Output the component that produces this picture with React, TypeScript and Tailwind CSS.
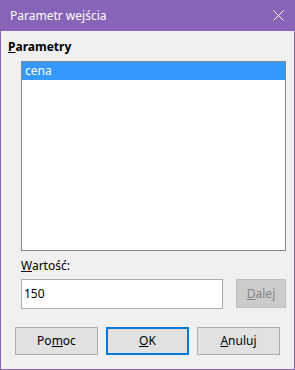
export default function App() {
  return (
    <div className="flex h-[370px] w-[295px] flex-col bg-[#8764b8] font-['Noto_Sans',sans-serif] text-[12px] text-black">
      <div className="flex h-[31px] shrink-0 items-center justify-between pl-[10px] pr-[11px] text-white">
        <span className="leading-none">Parametr wejścia</span>
        <svg width="11" height="11" viewBox="0 0 11 11" className="block">
          <path d="M0.5 0.5 L10.5 10.5 M10.5 0.5 L0.5 10.5" stroke="#fff" strokeWidth="1" />
        </svg>
      </div>

      <div className="mx-[1px] mb-[1px] flex flex-1 flex-col bg-[#f0f0f0] pl-[7px]">
        <div className="mt-[8px] h-[16px] font-bold leading-[16px]">
          <span className="underline">P</span>arametry
        </div>

        <div className="ml-[13px] mt-[6px] h-[190px] w-[265px] border border-[#828790] bg-white">
          <div className="flex h-[18px] items-center bg-[#3399ff] pl-[3px] text-white">cena</div>
        </div>

        <div className="ml-[13px] mt-[7px] h-[16px] leading-[16px]">
          <span className="underline">W</span>artość:
        </div>

        <div className="ml-[13px] mt-[5px] flex gap-[13px]">
          <div className="flex h-[30px] w-[202px] items-center border border-[#acacac] bg-white pl-[2px]">150</div>
          <div className="flex h-[29px] w-[50px] items-center justify-center border border-[#bfbfbf] bg-[#cccccc] text-[#838383]">
            <span><span className="underline">D</span>alej</span>
          </div>
        </div>

        <div className="ml-[7px] mt-[18px] flex gap-[8px]">
          <div className="flex h-[28px] w-[83px] items-center justify-center border border-[#adadad] bg-[#e1e1e1]">
            <span>Po<span className="underline">m</span>oc</span>
          </div>
          <div className="flex h-[28px] w-[83px] items-center justify-center border-2 border-[#0078d7] bg-[#e1e1e1]">
            <span><span className="underline">O</span>K</span>
          </div>
          <div className="flex h-[28px] w-[83px] items-center justify-center border border-[#adadad] bg-[#e1e1e1]">
            <span><span className="underline">A</span>nuluj</span>
          </div>
        </div>
      </div>
    </div>
  );
}
